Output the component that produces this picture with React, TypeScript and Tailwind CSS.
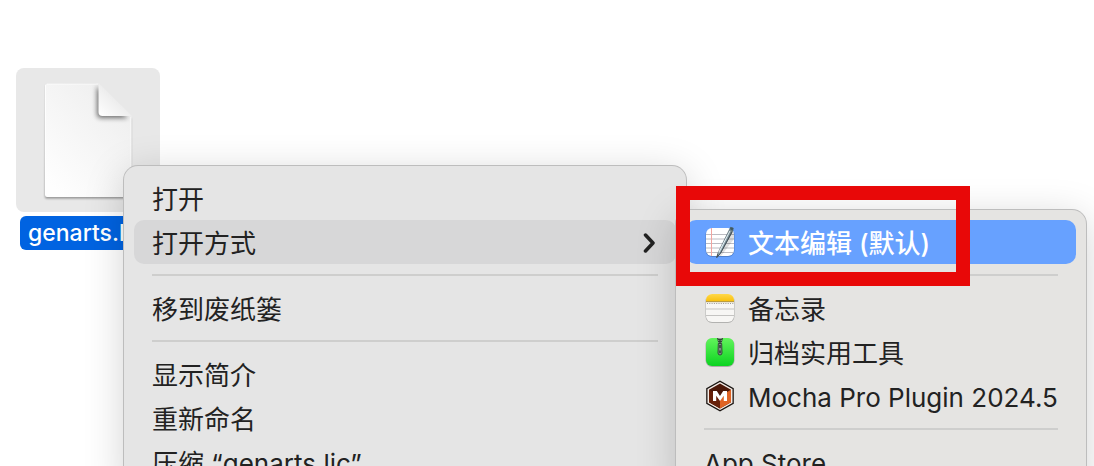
import type { ReactNode } from "react";
import { useId } from "react";

function DocumentIcon() {
  return (
    <svg viewBox="0 0 144 144" className="h-full w-full" aria-hidden="true">
      <defs>
        <linearGradient id="page" x1="1" y1="0" x2="0.2" y2="1">
          <stop offset="0" stopColor="#ececec" />
          <stop offset="1" stopColor="#fefefe" />
        </linearGradient>
        <linearGradient id="fold" x1="0" y1="1" x2="0.55" y2="0.45">
          <stop offset="0" stopColor="#ffffff" />
          <stop offset="1" stopColor="#ebebeb" />
        </linearGradient>
        <filter id="pageShadow" x="-20%" y="-20%" width="140%" height="140%">
          <feGaussianBlur stdDeviation="0.9" />
        </filter>
        <filter id="foldShadow" x="-50%" y="-50%" width="200%" height="200%">
          <feGaussianBlur stdDeviation="2.6" />
        </filter>
        <clipPath id="pageClip">
          <path d="M31 15.500H82.500L115.500 48.500V127a2 2 0 0 1-2 2H31a2 2 0 0 1-2-2V17.500a2 2 0 0 1 2-2z" />
        </clipPath>
      </defs>
      <path
        d="M30 17H80V50H115V129a1.500 1.500 0 0 1-1.500 1.500H30.500a1.500 1.500 0 0 1-1.500-1.500z"
        fill="#000"
        opacity="0.38"
        filter="url(#pageShadow)"
      />
      <path
        d="M31 15.500H82.500L115.500 48.500V127a2 2 0 0 1-2 2H31a2 2 0 0 1-2-2V17.500a2 2 0 0 1 2-2z"
        fill="url(#page)"
      />
      <g clipPath="url(#pageClip)">
        <path d="M81 18V46a4 4 0 0 0 4 4H112z" fill="#000" opacity="0.55" filter="url(#foldShadow)" />
        <path d="M31 16H82M29.500 17V127M115 49V127" stroke="#fff" strokeWidth="1" fill="none" opacity="0.8" />
      </g>
      <path d="M82.500 15V44a4 4 0 0 0 4 4H116z" fill="url(#fold)" />
    </svg>
  );
}

function TextEditIcon() {
  return (
    <svg viewBox="0 0 32 34" className="h-[34px] w-8 overflow-visible" aria-hidden="true">
      <defs>
        <clipPath id="noteClip"><rect x="2" y="3" width="28" height="28" rx="6" /></clipPath>
        <linearGradient id="pen" x1="0" y1="0" x2="1" y2="0.4">
          <stop offset="0" stopColor="#eef5f8" />
          <stop offset="0.5" stopColor="#9db4bf" />
          <stop offset="1" stopColor="#4c5a61" />
        </linearGradient>
      </defs>
      <rect x="1.500" y="3.500" width="29" height="28.500" rx="6.500" fill="#2b4f85" opacity="0.4" />
      <rect x="2" y="3" width="28" height="28" rx="6" fill="#fff" />
      <g clipPath="url(#noteClip)">
        <path d="M2 9.500H30M2 14H30M2 18.500H30M2 23H30M2 27.500H30" stroke="#bcbcc2" strokeWidth="1" />
        <path d="M7.500 3V31" stroke="#f2a5a0" strokeWidth="1" />
        <path d="M14 31L18 21 30 6V14L17 31z" fill="#000" opacity="0.12" />
      </g>
      <path d="M26.500 2.300L29.300 3.100 28.800 6 16.400 28.600 12.800 32.500 14.200 27.400z" fill="url(#pen)" stroke="#4d6068" strokeWidth="0.600" />
      <path d="M26.500 2.300L29.300 3.100 28.500 5.500 26 4.300z" fill="#3f5961" />
      <path d="M26 6L15 27" stroke="#f3fafc" strokeWidth="0.900" />
      <path d="M28 7L16.500 28 12.800 32.500 14 28.500" stroke="#3e4a4f" strokeWidth="0.900" fill="none" />
    </svg>
  );
}

function NotesIcon() {
  return (
    <svg viewBox="0 0 32 34" className="h-[34px] w-8" aria-hidden="true">
      <defs>
        <clipPath id="padClip"><rect x="2" y="3" width="28" height="28" rx="6" /></clipPath>
        <linearGradient id="padTop" x1="0" y1="0" x2="0" y2="1">
          <stop offset="0" stopColor="#ffd84a" />
          <stop offset="1" stopColor="#f8bf0b" />
        </linearGradient>
      </defs>
      <rect x="1.500" y="3.500" width="29" height="28.500" rx="6.500" fill="#000" opacity="0.22" />
      <g clipPath="url(#padClip)">
        <rect x="2" y="3" width="28" height="28" fill="#f7f6f4" />
        <rect x="2" y="3" width="28" height="7.500" fill="url(#padTop)" />
        <path d="M2 10.700H30" stroke="#9b7a1c" strokeWidth="0.800" />
        <path d="M3 12.500H30" stroke="#9a9a98" strokeWidth="1" strokeDasharray="1 1.300" />
        <path d="M2 18H30M2 24.500H30" stroke="#c4c3c1" strokeWidth="1" />
      </g>
    </svg>
  );
}

function ArchiveIcon() {
  return (
    <svg viewBox="0 0 32 34" className="h-[34px] w-8" aria-hidden="true">
      <defs>
        <linearGradient id="zipBg" x1="0" y1="0" x2="0" y2="1">
          <stop offset="0" stopColor="#62f45c" />
          <stop offset="1" stopColor="#0bd320" />
        </linearGradient>
      </defs>
      <rect x="1.500" y="3.500" width="29" height="28.500" rx="6.500" fill="#000" opacity="0.25" />
      <rect x="2" y="3" width="28" height="28" rx="6" fill="url(#zipBg)" />
      <path d="M13 3H19L17.700 8H14.300z" fill="#334a37" />
      <path d="M16 3V14" stroke="#8c9a90" strokeWidth="3.500" strokeDasharray="1 1" />
      <path d="M16 4V13" stroke="#2d4733" strokeWidth="1.400" />
      <path d="M14.300 8.500H17.700L18 18a2 2 0 0 1-4 0z" fill="#818b86" stroke="#2b4232" strokeWidth="0.900" />
      <path d="M16 10V13M16 15.500V18" stroke="#213a28" strokeWidth="1.300" />
    </svg>
  );
}

function MochaIcon() {
  return (
    <svg viewBox="0 0 32 34" className="h-[34px] w-8" aria-hidden="true">
      <path d="M16 1.500L29.800 9.300V24.700L16 32.500 2.200 24.700V9.300z" fill="#191310" />
      <path d="M16 2.900L28.500 10V24L16 31.100 3.500 24V10z" fill="#f5ece6" />
      <path d="M16 4.500L27 10.800V23.200L16 29.500 5 23.200V10.800z" fill="#4b1708" />
      <path d="M16 17L27 10.800V23.200L16 29.500z" fill="#df6425" />
      <path d="M5 10.800L16 17V29.500L5 23.200z" fill="#672009" />
      <path d="M9 22V12H12.800L16 17 19.200 12H23V22H19.800V16.800L16 22 12.200 16.800V22z" fill="#fff" />
    </svg>
  );
}

function Chevron() {
  return (
    <svg viewBox="0 0 14 22" className="mr-0.5 h-[22px] w-3.5 shrink-0" fill="none" stroke="#222" strokeWidth="3.500" strokeLinecap="round" strokeLinejoin="round" aria-hidden="true">
      <path d="M3.500 4L11 12 3.500 20" />
    </svg>
  );
}

interface ItemProps {
  children: ReactNode;
  icon?: ReactNode;
  state?: "open" | "selected";
  submenu?: boolean;
}

function MenuItem({ children, icon, state, submenu }: ItemProps) {
  const labelId = useId();
  const tone =
    state === "selected" ? "bg-[#67a1ff] text-white font-medium" : state === "open" ? "bg-[#d7d7d8]" : "";
  return (
    <button
      type="button"
      role="menuitem"
      aria-labelledby={labelId}
      aria-haspopup={submenu ? "menu" : undefined}
      className={`flex h-11 w-full shrink-0 items-center gap-3 rounded-[10px] px-[18px] text-left ${tone}`}
    >
      {icon && <span className="flex shrink-0">{icon}</span>}
      <span id={labelId} className="grow pt-[3px] whitespace-nowrap">{children}</span>
      {submenu && <Chevron />}
    </button>
  );
}

function Separator() {
  return (
    <div role="separator" className="flex h-[22px] shrink-0 items-center px-[18px]">
      <div className="h-0.5 w-full bg-[#cececd]" />
    </div>
  );
}

export default function App() {
  return (
    <main className="relative h-screen overflow-hidden bg-white font-['Inter','Noto_Sans_CJK_SC',sans-serif] text-[26px] leading-9 text-[#222]">
      <figure className="flex w-[176px] flex-col items-center gap-1 pt-[68px]">
        <div className="h-36 w-36 rounded-lg bg-[#e8e8e8]">
          <DocumentIcon />
        </div>
        <figcaption className="min-w-[136px] rounded-md bg-[#0063e1] px-2 text-[23px] leading-[34px] font-medium text-white">
          genarts.lic
        </figcaption>
      </figure>

      <div
        role="menu"
        aria-label="genarts.lic"
        className="absolute top-[166px] left-[124px] flex w-[562px] flex-col rounded-[14px] bg-[#e5e5e5] p-2.5 shadow-[0_0_0_1px_#bdbdbd,0_8px_40px_rgba(0,0,0,0.18)]"
      >
        <MenuItem>打开</MenuItem>
        <MenuItem state="open" submenu>打开方式</MenuItem>
        <Separator />
        <MenuItem>移到废纸篓</MenuItem>
        <Separator />
        <MenuItem>显示简介</MenuItem>
        <MenuItem>重新命名</MenuItem>
        <MenuItem>压缩 “genarts.lic”</MenuItem>
      </div>

      <div
        role="menu"
        aria-label="打开方式"
        className="absolute top-[210px] left-[676px] flex w-[410px] flex-col rounded-[14px] bg-[#e5e4e2] p-2.5 shadow-[0_0_0_1px_#bdbdbd,0_8px_40px_rgba(0,0,0,0.18)]"
      >
        <MenuItem icon={<TextEditIcon />} state="selected">文本编辑 (默认)</MenuItem>
        <Separator />
        <MenuItem icon={<NotesIcon />}>备忘录</MenuItem>
        <MenuItem icon={<ArchiveIcon />}>归档实用工具</MenuItem>
        <MenuItem icon={<MochaIcon />}>Mocha Pro Plugin 2024.5</MenuItem>
        <Separator />
        <MenuItem>App Store</MenuItem>
      </div>

      <div className="pointer-events-none absolute top-[186px] left-[676px] h-[100px] w-[294px] border-[14px] border-[#e80808]" />
    </main>
  );
}
